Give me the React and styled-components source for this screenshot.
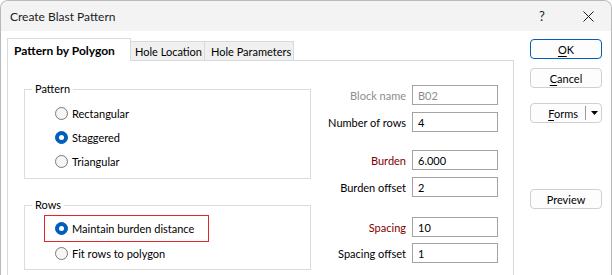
import React from "react";
import styled, { createGlobalStyle, css } from "styled-components";

const GlobalStyle = createGlobalStyle`
  html, body { margin: 0; padding: 0; background: #ffffff; }
  body {
    font-family: Lato, "Noto Sans", sans-serif;
    font-size: 11px;
    color: #000;
  }
  #root { width: 612px; height: 275px; }
`;

const Window = styled.div`
  box-sizing: border-box;
  width: 612px;
  height: 275px;
  overflow: hidden;
  border: 1px solid #b9b9b9;
  border-bottom: none;
  border-radius: 8px 8px 0 0;
  background: #fff;
  display: flex;
  flex-direction: column;
`;

const TitleBar = styled.div`
  height: 30px;
  flex: none;
  display: flex;
  align-items: center;
  background: #f3f3f3;
  padding-left: 9px;
`;

const Title = styled.div`
  flex: 1;
  font-size: 12px;
  color: #1b1b1b;
`;

const CaptionButton = styled.div`
  width: 46px;
  height: 30px;
  display: flex;
  align-items: center;
  justify-content: center;
  font-size: 13px;
  color: #1b1b1b;
`;

const Body = styled.div`
  flex: 1;
  display: flex;
  padding: 7px 0 0 6px;
  min-height: 0;
`;

const LeftArea = styled.div`
  width: 507px;
  flex: none;
  display: flex;
  flex-direction: column;
`;

const TabStrip = styled.div`
  height: 22px;
  display: flex;
  align-items: flex-end;
  flex: none;
`;

const Tab = styled.div`
  box-sizing: border-box;
  width: ${(p) => p.$w}px;
  padding-left: ${(p) => p.$pl}px;
  display: flex;
  align-items: center;
  white-space: nowrap;
  border-top: 1px solid #d9d9d9;
  border-right: 1px solid #d9d9d9;
  ${(p) =>
    p.$active
      ? css`
          height: 23px;
          margin-bottom: -1px;
          background: #fff;
          border-left: 1px solid #d9d9d9;
          font-weight: 700;
          font-size: 12px;
          position: relative;
          z-index: 1;
        `
      : css`
          height: 19px;
          background: #f0f0f0;
        `}
`;

const Panel = styled.div`
  flex: 1;
  border: 1px solid #d9d9d9;
  border-bottom: none;
  background: #fff;
  display: flex;
  padding: 21px 15px 0 16px;
`;

const LeftCol = styled.div`
  width: 287px;
  flex: none;
  display: flex;
  flex-direction: column;
`;

const Group = styled.fieldset`
  box-sizing: border-box;
  width: 287px;
  min-width: 0;
  margin: ${(p) => p.$mt || 0}px 0 0 0;
  padding: ${(p) => p.$pt}px 0 5px 7px;
  border: 1px solid #dcdcdc;
`;

const Legend = styled.legend`
  padding: 0 3px;
  line-height: 14px;
  font-size: 11px;
`;

const RadioRow = styled.div`
  height: ${(p) => p.$h}px;
  display: flex;
  align-items: center;
  gap: 4px;
  padding-left: 23px;
`;

const Highlight = styled.div`
  box-sizing: border-box;
  width: 165px;
  height: 27px;
  margin-left: 12px;
  border: 1px solid #e3252c;
  display: flex;
  align-items: center;
  gap: 4px;
  padding-left: 10px;
`;

const Radio = styled.span`
  box-sizing: border-box;
  width: 13px;
  height: 13px;
  flex: none;
  border-radius: 50%;
  border: 1px solid ${(p) => (p.$checked ? "#005fb8" : "#7a7a7a")};
  background: ${(p) => (p.$checked ? "#005fb8" : "#f6f6f6")};
  display: flex;
  align-items: center;
  justify-content: center;
  &::after {
    content: "";
    width: 5px;
    height: 5px;
    border-radius: 50%;
    background: #fff;
    display: ${(p) => (p.$checked ? "block" : "none")};
  }
`;

const FieldsCol = styled.div`
  flex: 1;
  display: flex;
  flex-direction: column;
  align-items: flex-end;
  padding-top: 3px;
`;

const FieldRow = styled.div`
  display: flex;
  align-items: center;
  gap: 6px;
  margin-top: ${(p) => p.$mt}px;
`;

const toneColor = { normal: "#000", disabled: "#8d8d8d", required: "#800000" };

const FieldLabel = styled.label`
  color: ${(p) => toneColor[p.$tone || "normal"]};
  white-space: nowrap;
`;

const Input = styled.input`
  box-sizing: border-box;
  width: 86px;
  height: 20px;
  margin: 0;
  padding: 0 5px;
  border: 1px solid #a3a3a3;
  border-radius: 0;
  background: #fff;
  font-family: inherit;
  font-size: 11px;
  color: ${(p) => (p.$disabled ? "#8d8d8d" : "#000")};
  outline: none;
`;

const ButtonCol = styled.div`
  width: 72px;
  flex: none;
  margin-left: 16px;
  padding-top: 1px;
  display: flex;
  flex-direction: column;
`;

const Button = styled.div`
  box-sizing: border-box;
  height: 20px;
  margin-top: ${(p) => p.$mt || 0}px;
  border: 1px solid ${(p) => (p.$primary ? "#005fb8" : "#d0d0d0")};
  border-radius: 4px;
  background: #fdfdfd;
  display: flex;
  align-items: center;
  justify-content: ${(p) => (p.$split ? "flex-end" : "center")};
  padding-right: ${(p) => (p.$split ? 3 : 0)}px;
  color: #000;
`;

const U = styled.span`
  text-decoration: underline;
  text-underline-offset: 2px;
  text-decoration-thickness: 1px;
`;

const Sep = styled.span`
  width: 1px;
  height: 14px;
  background: #9a9a9a;
  margin: 0 5px 0 7px;
`;

const radiosPattern = [
  { label: "Rectangular", checked: false },
  { label: "Staggered", checked: true },
  { label: "Triangular", checked: false },
];

const fields = [
  { label: "Block name", value: "B02", tone: "disabled", mt: 0 },
  { label: "Number of rows", value: "4", tone: "normal", mt: 7 },
  { label: "Burden", value: "6.000", tone: "required", mt: 18 },
  { label: "Burden offset", value: "2", tone: "normal", mt: 7 },
  { label: "Spacing", value: "10", tone: "required", mt: 20 },
  { label: "Spacing offset", value: "1", tone: "normal", mt: 6 },
];

export default function App() {
  return (
    <>
      <GlobalStyle />
      <Window>
        <TitleBar>
          <Title>Create Blast Pattern</Title>
          <CaptionButton>?</CaptionButton>
          <CaptionButton>
            <svg width="11" height="11" viewBox="0 0 11 11">
              <path d="M0.5 0.5 L10.5 10.5 M10.5 0.5 L0.5 10.5" stroke="#1b1b1b" strokeWidth="1" fill="none" />
            </svg>
          </CaptionButton>
        </TitleBar>
        <Body>
          <LeftArea>
            <TabStrip>
              <Tab $active $w={124} $pl={6}>Pattern by Polygon</Tab>
              <Tab $w={74} $pl={4}>Hole Location</Tab>
              <Tab $w={89} $pl={6}>Hole Parameters</Tab>
            </TabStrip>
            <Panel>
              <LeftCol>
                <Group $pt={5}>
                  <Legend>Pattern</Legend>
                  {radiosPattern.map((r) => (
                    <RadioRow key={r.label} $h={24}>
                      <Radio $checked={r.checked} />
                      <span>{r.label}</span>
                    </RadioRow>
                  ))}
                </Group>
                <Group $pt={3} $mt={19}>
                  <Legend>Rows</Legend>
                  <Highlight>
                    <Radio $checked />
                    <span>Maintain burden distance</span>
                  </Highlight>
                  <RadioRow $h={22}>
                    <Radio />
                    <span>Fit rows to polygon</span>
                  </RadioRow>
                </Group>
              </LeftCol>
              <FieldsCol>
                {fields.map((f) => (
                  <FieldRow key={f.label} $mt={f.mt}>
                    <FieldLabel $tone={f.tone}>{f.label}</FieldLabel>
                    <Input readOnly value={f.value} $disabled={f.tone === "disabled"} />
                  </FieldRow>
                ))}
              </FieldsCol>
            </Panel>
          </LeftArea>
          <ButtonCol>
            <Button $primary>
              <span><U>O</U>K</span>
            </Button>
            <Button $mt={9}>
              <span><U>C</U>ancel</span>
            </Button>
            <Button $mt={15} $split>
              <span><U>F</U>orms</span>
              <Sep />
              <svg width="7" height="4" viewBox="0 0 7 4">
                <polygon points="0,0 7,0 3.5,4" fill="#000" />
              </svg>
            </Button>
            <Button $mt={66}>Preview</Button>
          </ButtonCol>
        </Body>
      </Window>
    </>
  );
}
